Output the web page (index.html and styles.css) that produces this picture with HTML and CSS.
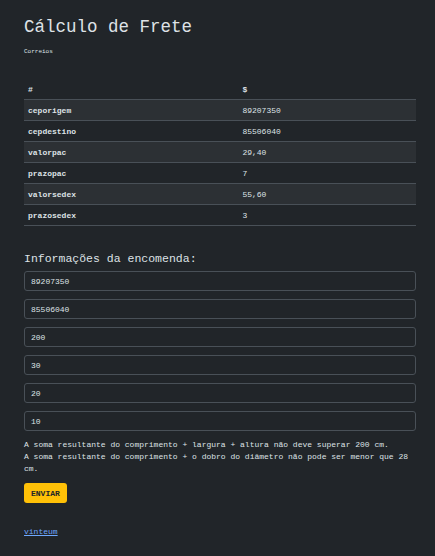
FILE: index.html
```html
<!DOCTYPE html>
<html lang="pt-BR">
<head>
<meta charset="utf-8">
<title>Cálculo de Frete</title>
<link rel="stylesheet" href="styles.css">
</head>
<body>
<main class="container">
  <h1 class="title">Cálculo de Frete</h1>
  <p class="subtitle">Correios</p>
  <table class="table">
    <thead>
      <tr><th>#</th><th>$</th></tr>
    </thead>
    <tbody>
      <tr><th>ceporigem</th><td>89207350</td></tr>
      <tr><th>cepdestino</th><td>85506040</td></tr>
      <tr><th>valorpac</th><td>29,40</td></tr>
      <tr><th>prazopac</th><td>7</td></tr>
      <tr><th>valorsedex</th><td>55,60</td></tr>
      <tr><th>prazosedex</th><td>3</td></tr>
    </tbody>
  </table>
  <form class="form">
    <h2 class="form-title">Informações da encomenda:</h2>
    <input class="field" type="text" value="89207350">
    <input class="field" type="text" value="85506040">
    <input class="field" type="text" value="200">
    <input class="field" type="text" value="30">
    <input class="field" type="text" value="20">
    <input class="field" type="text" value="10">
    <p class="note">A soma resultante do comprimento + largura + altura não deve superar 200 cm.<br>A soma resultante do comprimento + o dobro do diâmetro não pode ser menor que 28 cm.</p>
    <button class="btn" type="button">ENVIAR</button>
  </form>
  <a class="link" href="#">vinteum</a>
</main>
</body>
</html>
```
FILE: styles.css
```css
html, body {
  margin: 0;
  padding: 0;
  background: #212529;
  color: #dee2e6;
  font-family: "Liberation Mono", "DejaVu Sans Mono", monospace;
}
.container {
  padding: 16px 19px 20px 24px;
  display: flex;
  flex-direction: column;
}
.title {
  margin: 0;
  font-size: 17.5px;
  font-weight: 400;
  line-height: 22px;
  color: #dee2e6;
}
.subtitle {
  margin: 10px 0 0;
  font-size: 6px;
  line-height: 8px;
  color: #dee2e6;
}
.table {
  margin-top: 23px;
  width: 100%;
  border-collapse: collapse;
  font-size: 8px;
}
.table th, .table td {
  text-align: left;
  padding: 0 4px;
  height: 20px;
  border-bottom: 1px solid #495057;
  color: #dee2e6;
}
.table th { font-weight: 700; }
.table td { font-weight: 400; }
.table tbody tr:nth-child(odd) th,
.table tbody tr:nth-child(odd) td { background: #2c3034; }
.form {
  margin-top: 25px;
  display: flex;
  flex-direction: column;
  align-items: flex-start;
}
.form-title {
  margin: 0 0 4px;
  font-size: 11.5px;
  font-weight: 400;
  line-height: 16px;
  color: #dee2e6;
}
.field {
  box-sizing: border-box;
  width: 100%;
  height: 20px;
  margin: 0 0 8px;
  padding: 0 6px;
  background: #212529;
  border: 1px solid #495057;
  border-radius: 3px;
  color: #dee2e6;
  font-family: inherit;
  font-size: 8px;
}
.note {
  margin: 0 0 8px;
  font-size: 8px;
  line-height: 12px;
  color: #dee2e6;
}
.btn {
  height: 20px;
  padding: 0 7px;
  background: #ffc107;
  border: 0;
  border-radius: 3px;
  color: #212529;
  font-family: inherit;
  font-size: 8px;
  font-weight: 700;
}
.link {
  margin-top: 24px;
  align-self: flex-start;
  font-size: 8px;
  color: #6ea8fe;
}
```
